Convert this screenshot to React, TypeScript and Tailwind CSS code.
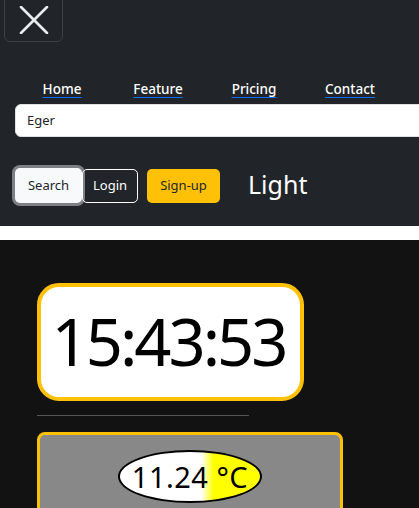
import React from "react";

export default function App() {
  const font = { fontFamily: '"Noto Sans", "Open Sans", sans-serif' };
  return (
    <div className="w-[419px] h-[508px] overflow-hidden bg-[#121212]" style={font}>
      <div className="bg-[#212529] h-[226px] flex flex-col">
        <div className="ml-[4px] -mt-[8px] w-[59px] h-[50px] border border-[#3b4046] rounded-[6px] flex items-center justify-center pt-[6px]">
          <svg width="30" height="28" viewBox="0 0 30 28">
            <path d="M2 1 L28 27 M28 1 L2 27" stroke="#e9ecef" strokeWidth="2.6" strokeLinecap="round" />
          </svg>
        </div>
        <ul className="flex gap-[4px] ml-[16px] mt-[37px] text-[13.5px] font-medium text-white leading-[20px]">
          {["Home", "Feature", "Pricing", "Contact"].map((t) => (
            <li key={t} className="w-[92px] text-center">
              <a className="underline decoration-[#0d6efd] underline-offset-[3px]">{t}</a>
            </li>
          ))}
        </ul>
        <div className="ml-[15px] mt-[5px] w-[420px] h-[33px] bg-white rounded-[6px] border border-[#dee2e6] flex items-center pl-[11px] text-[13px] text-[#212529]">
          Eger
        </div>
        <div className="flex items-center ml-[15px] mt-[31px]">
          <button className="h-[35px] w-[67px] bg-[#f8f9fa] text-[#212529] text-[13px] rounded-[5px] shadow-[0_0_0_3px_#7d8085]">
            Search
          </button>
          <button className="h-[34px] w-[56px] border border-white text-white text-[13px] rounded-[5px]">
            Login
          </button>
          <button className="ml-[9px] h-[34px] w-[73px] bg-[#ffc107] text-[#212529] text-[13px] rounded-[5px]">
            Sign-up
          </button>
          <span className="ml-[28px] text-white text-[25px] leading-[30px] -mt-[4px]">Light</span>
        </div>
      </div>
      <div className="h-[14px] bg-white" />
      <div className="pl-[37px] pt-[43px]">
        <div className="w-[267px] h-[118px] border-[4px] border-[#ffc107] rounded-[22px] bg-white flex items-center justify-center text-black text-[65px] tracking-[-3px] leading-none pb-[2px] pr-[4px]">
          15:43:53
        </div>
        <div className="mt-[14px] w-[212px] border-t border-[#555]" />
        <div className="mt-[16px] w-[306px] h-[100px] border-[3px] border-[#ffc107] rounded-[8px] bg-[#888] flex justify-center pt-[15px]">
          <div
            className="w-[144px] h-[53px] rounded-[50%] border-2 border-black flex items-center justify-center text-black text-[29px] tracking-[0.5px] leading-none"
            style={{ background: "linear-gradient(to right, #ffffff 58%, #ffff00 67%)" }}
          >
            11.24 °C
          </div>
        </div>
      </div>
    </div>
  );
}
